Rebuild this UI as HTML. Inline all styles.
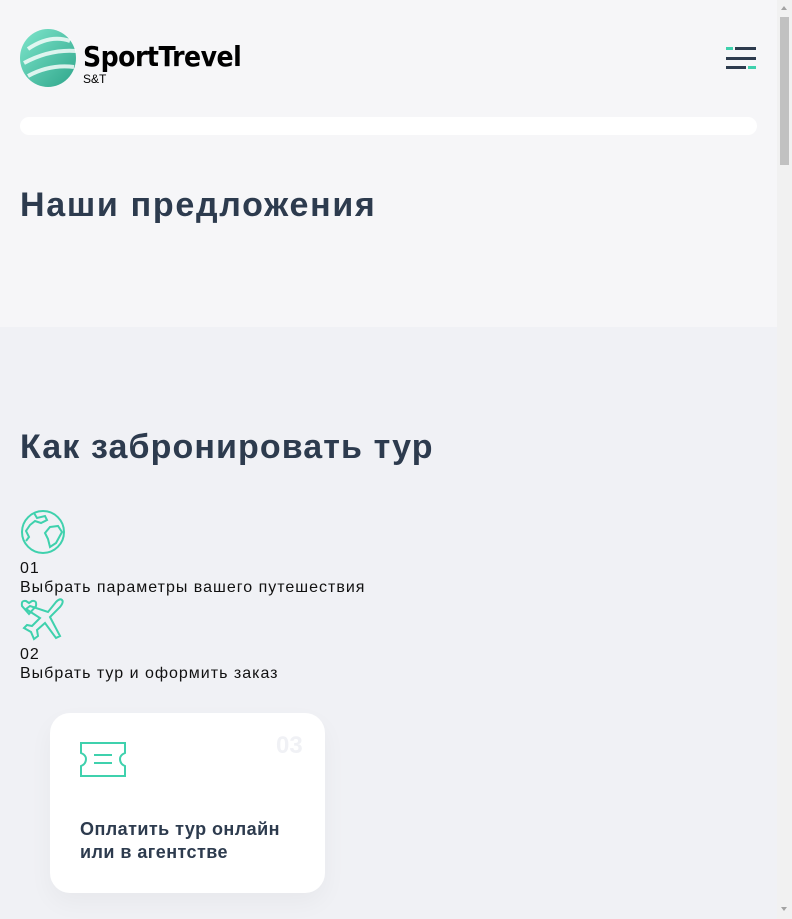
<!DOCTYPE html>
<html><head><meta charset="utf-8"><style>
body{margin:0;width:792px;height:919px;overflow:hidden;font-family:"Liberation Sans",sans-serif;background:#f0f1f5;position:relative}
.top{position:absolute;left:0;top:0;width:777px;height:327px;background:#f6f6f8}
.low{position:absolute;left:0;top:327px;width:777px;height:592px;background:#f0f1f5}
.sb{position:absolute;left:777px;top:0;width:15px;height:919px;background:#f1f1f1}
.sb .th{position:absolute;left:3px;top:17px;width:9px;height:148px;background:#c1c1c1}
h2{position:absolute;left:20px;margin:0;font-size:34px;font-weight:bold;color:#2d3b4e}
.t{position:absolute;left:20px;font-size:16px;color:#111;line-height:19px;letter-spacing:1px}
</style></head><body>
<div class="top"></div><div class="low"></div>
<div class="sb"><div class="th"></div><div style="position:absolute;left:4px;top:6px;border:3.5px solid transparent;border-bottom:4px solid #a3a3a3;border-top:0"></div><div style="position:absolute;left:4px;top:907px;border:3.5px solid transparent;border-top:4px solid #a3a3a3;border-bottom:0"></div></div>
<svg style="position:absolute;left:20px;top:29px" width="58" height="58" viewBox="0 0 58 58"><defs><linearGradient id="g" x1="0" y1="0" x2="1" y2="1"><stop offset="0" stop-color="#7fe6cc"/><stop offset="1" stop-color="#2ea58a"/></linearGradient></defs><ellipse cx="28" cy="29" rx="28" ry="29" fill="url(#g)"/><path d="M8 20 Q30 5 50 12 M4 34 Q30 20 56 22 M8 47 Q30 35 54 38" stroke="#fff" stroke-width="4" fill="none" opacity=".8"/></svg>
<div style="position:absolute;left:83px;top:40px;font-size:28px;font-weight:bold;color:#000;font-family:'DejaVu Sans Condensed','Liberation Sans',sans-serif;letter-spacing:-.5px">SportTrevel</div>
<div style="position:absolute;left:83px;top:72px;font-size:12px;color:#000">S&amp;T</div>
<div style="position:absolute;left:726px;top:47px;width:7px;height:3px;background:#3fd1ad"></div>
<div style="position:absolute;left:735px;top:47px;width:21px;height:3px;background:#2d3b4e"></div>
<div style="position:absolute;left:726px;top:57px;width:30px;height:3px;background:#2d3b4e"></div>
<div style="position:absolute;left:726px;top:66px;width:20px;height:3px;background:#2d3b4e"></div>
<div style="position:absolute;left:748px;top:66px;width:8px;height:3px;background:#3fd1ad"></div>
<div style="position:absolute;left:20px;top:117px;width:737px;height:18px;background:#fff;border-radius:9px"></div>
<h2 style="top:186px;letter-spacing:1.7px">Наши предложения</h2>
<h2 style="top:428px;letter-spacing:1.1px">Как забронировать тур</h2>
<svg style="position:absolute;left:20px;top:509px" width="46" height="46" viewBox="0 0 46 46" fill="none" stroke="#3fd1ad" stroke-width="2"><circle cx="23" cy="23" r="21"/><path d="M14 4 L17 9 L25 7 L27 11 L21 14 L15 12 L10 16 L6 22 L9 28 L6 32 M30 18 L38 17 L42 23 L36 34 L30 38 L28 30 L25 24 Z"/></svg>
<div class="t" style="top:559px">01</div>
<div class="t" style="top:578px">Выбрать параметры вашего путешествия</div>
<svg style="position:absolute;left:20px;top:597px" width="46" height="44" viewBox="0 0 46 44" fill="none" stroke="#3fd1ad" stroke-width="2"><path d="M9 17 L2 9 Q1 3 6 4 L9 6 L12 4 Q17 3 16 9 Z"/><path d="M42 3 Q44 5 40 10 L30 20 L40 39 L36 41 L25 26 L17 33 L18 39 L14 42 L11 35 L4 31 L7 28 L12 29 L20 21 L6 12 L10 9 L28 15 L36 5 Q40 1 42 3Z"/></svg>
<div class="t" style="top:645px">02</div>
<div class="t" style="top:664px">Выбрать тур и оформить заказ</div>
<div style="position:absolute;left:50px;top:713px;width:275px;height:180px;background:#fff;border-radius:20px;box-shadow:0 10px 25px rgba(0,0,0,.04)"></div>
<div style="position:absolute;left:276px;top:732px;font-size:24px;font-weight:bold;color:#f0f1f5">03</div>
<svg style="position:absolute;left:80px;top:742px" width="46" height="35" viewBox="0 0 46 35" fill="none" stroke="#3fd1ad" stroke-width="2"><path d="M1 1 H45 V11 Q40 13 40 17 Q40 22 45 24 V34 H1 V24 Q6 22 6 17 Q6 13 1 11 Z M14 13 H32 M14 21 H32"/></svg>
<div style="position:absolute;left:80px;top:818px;font-size:18px;font-weight:bold;color:#2d3b4e;line-height:23px;letter-spacing:.45px">Оплатить тур онлайн<br>или в агентстве</div>
</body></html>
